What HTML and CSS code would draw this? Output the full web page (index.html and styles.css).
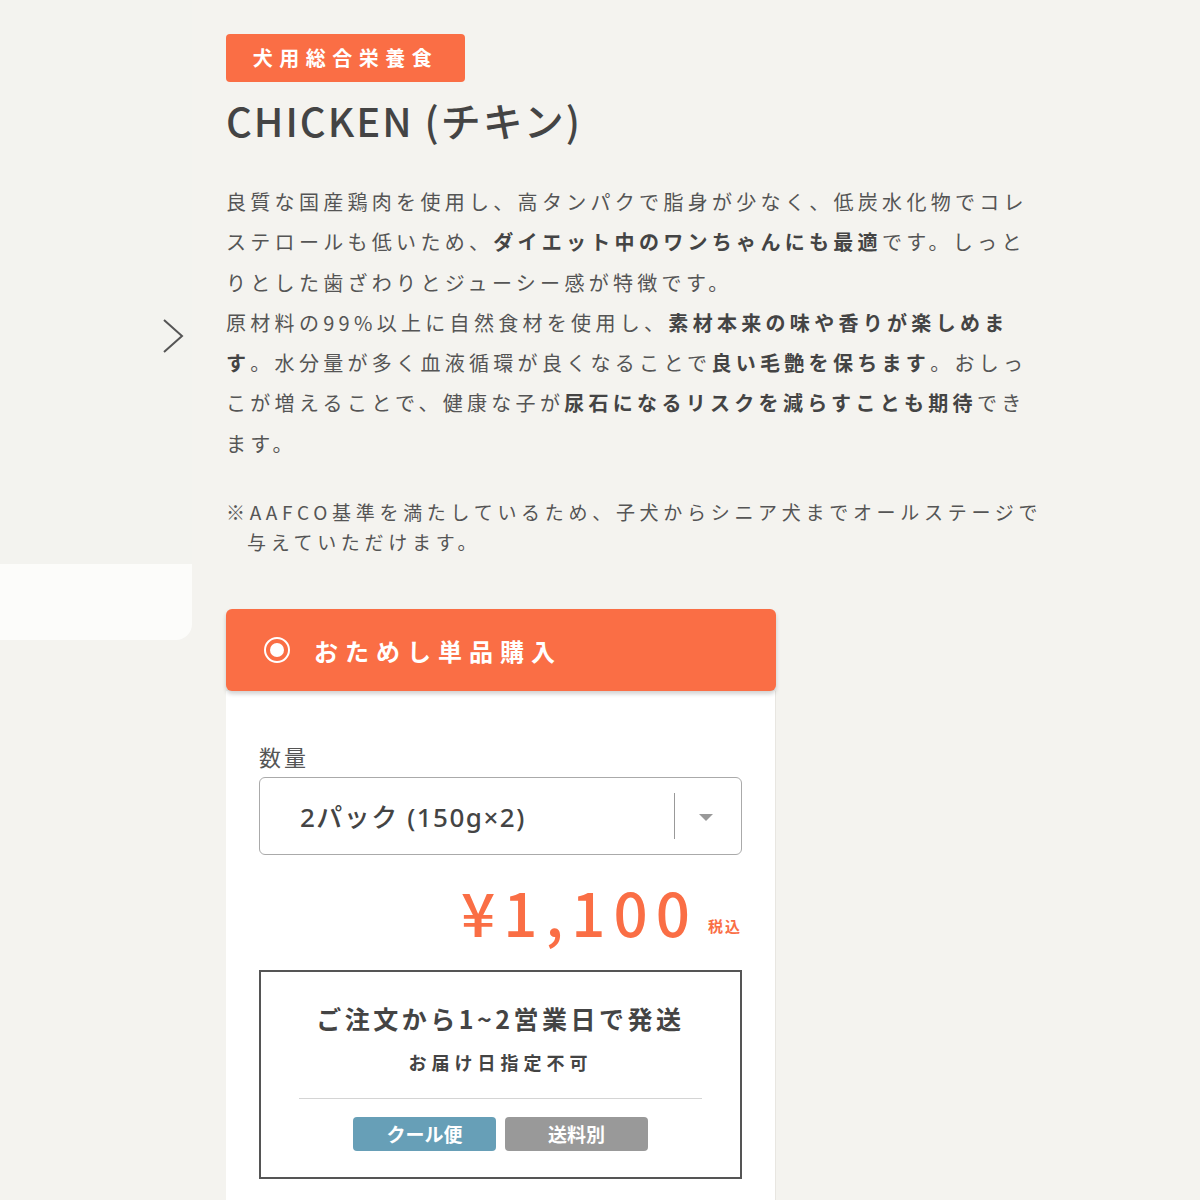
FILE: index.html
```html
<!DOCTYPE html>
<html lang="ja">
<head>
    <meta charset="utf-8">
    <title>CHICKEN (チキン)</title>
    <link rel="stylesheet" href="styles.css">
</head>
<body>
    <div class="page">
        <div class="gallery">
            <div class="gallery-image"></div>
            <div class="gallery-caption"></div>
            <button class="gallery-next" aria-label="次へ">
                <svg width="22" height="36" viewBox="0 0 22 36"><path d="M2 2 L20 18 L2 34" fill="none" stroke="#555" stroke-width="2"/></svg>
            </button>
        </div>

        <div class="product">
            <span class="badge">犬用総合栄養食</span>
            <h1 class="title">CHICKEN (チキン)</h1>

            <p class="desc">
                良質な国産鶏肉を使用し、高タンパクで脂身が少なく、低炭水化物でコレ<br>ステロールも低いため、<b>ダイエット中のワンちゃんにも最適</b>です。しっと<br>りとした歯ざわりとジューシー感が特徴です。<br>原材料の99%以上に自然食材を使用し、<b>素材本来の味や香りが楽しめま<br>す</b>。水分量が多く血液循環が良くなることで<b>良い毛艶を保ちます</b>。おしっ<br>こが増えることで、健康な子が<b>尿石になるリスクを減らすことも期待</b>でき<br>ます。
            </p>

            <p class="note">※AAFCO基準を満たしているため、子犬からシニア犬までオールステージで与えていただけます。</p>

            <div class="purchase">
                <div class="purchase-head">
                    <span class="radio"></span>
                    おためし単品購入
                </div>
                <div class="purchase-body">
                    <label class="qty-label">数量</label>
                    <div class="select">
                        <span class="select-value">2パック (150g×2)</span>
                        <span class="select-sep"></span>
                        <span class="select-arrow"></span>
                    </div>

                    <div class="price">¥1,100<small>税込</small></div>

                    <div class="ship">
                        <div class="ship-title">ご注文から1~2営業日で発送</div>
                        <div class="ship-sub">お届け日指定不可</div>
                        <hr>
                        <div class="tags">
                            <span class="tag tag-cool">クール便</span>
                            <span class="tag tag-fee">送料別</span>
                        </div>
                    </div>
                </div>
            </div>
        </div>
    </div>
</body>
</html>
```

FILE: styles.css
```css
body {
    margin: 0;
    background: #f4f3ef;
    color: #555;
    font-family: "Noto Sans CJK JP", "Noto Sans", sans-serif;
}
.page {
    display: flex;
    gap: 34px;
    align-items: flex-start;
}

/* 左側のスライダー */
.gallery {
    position: relative;
    width: 192px;
    height: 640px;
    flex-shrink: 0;
    display: flex;
    flex-direction: column;
    border-bottom-right-radius: 16px;
    overflow: hidden;
}
.gallery-image {
    flex: 1;
    background: #f3f3ef;
}
.gallery-caption {
    height: 76px;
    background: #fcfcfa;
}
.gallery-next {
    position: absolute;
    top: 318px;
    right: 8px;
    padding: 0;
    border: none;
    background: none;
    cursor: pointer;
}

/* 商品情報 */
.product {
    width: 830px;
    padding-top: 34px;
}
.badge {
    display: inline-block;
    width: 239px;
    height: 48px;
    line-height: 48px;
    text-align: center;
    background: #fa6e45;
    color: #fff;
    border-radius: 4px;
    font-size: 20px;
    font-weight: 700;
    letter-spacing: 6.5px;
}
.title {
    margin: 14px 0 0;
    font-size: 40px;
    font-weight: 500;
    color: #444;
    letter-spacing: 2px;
    line-height: 1.2;
}
.desc {
    margin: 38px 0 0;
    font-size: 20px;
    line-height: 40.3px;
    letter-spacing: 4.3px;
    white-space: nowrap;
}
.desc b {
    color: #444;
}
.note {
    margin: 33px 0 0;
    width: 805px;
    padding-left: 21px;
    text-indent: -21px;
    font-size: 19px;
    line-height: 30px;
    letter-spacing: 4.7px;
}

/* 購入カード */
.purchase {
    width: 550px;
    margin-top: 52px;
}
.purchase-head {
    display: flex;
    align-items: center;
    gap: 24px;
    height: 82px;
    padding-left: 38px;
    background: #fa6e45;
    color: #fff;
    border-radius: 6px;
    box-shadow: 0 3px 4px rgba(0, 0, 0, 0.18);
    font-size: 24px;
    font-weight: 700;
    letter-spacing: 7px;
    position: relative;
}
.radio {
    width: 22px;
    height: 22px;
    border: 2.5px solid #fff;
    border-radius: 50%;
    display: flex;
    align-items: center;
    justify-content: center;
}
.radio::after {
    content: "";
    width: 14px;
    height: 14px;
    border-radius: 50%;
    background: #fff;
}
.purchase-body {
    background: #fff;
    padding: 50px 33px 40px;
    border-right: 1px solid #e8e6e1;
}
.qty-label {
    display: block;
    font-size: 22px;
    letter-spacing: 3px;
    line-height: 30px;
}
.select {
    display: flex;
    align-items: center;
    height: 76px;
    margin-top: 6px;
    border: 1.5px solid #aaa;
    border-radius: 6px;
}
.select-value {
    flex: 1;
    padding-left: 40px;
    font-family: "Noto Sans", "Noto Sans CJK JP", sans-serif;
    font-size: 26px;
    font-weight: 500;
    color: #444;
    letter-spacing: 1.5px;
}
.select-sep {
    width: 1px;
    height: 46px;
    background: #999;
}
.select-arrow {
    width: 0;
    height: 0;
    margin: 2px 28px 0 24px;
    border-left: 7px solid transparent;
    border-right: 7px solid transparent;
    border-top: 7px solid #999;
}
.price {
    text-align: right;
    margin-top: 24px;
    color: #fa6e45;
    font-size: 60px;
    font-weight: 500;
    letter-spacing: 8px;
    line-height: 64px;
}
.price small {
    font-size: 15px;
    font-weight: 700;
    letter-spacing: 2px;
    margin-left: 10px;
    vertical-align: 5px;
}
.ship {
    margin-top: 12px;
    border: 2px solid #555;
    padding: 28px 38px 26px;
    text-align: center;
    color: #444;
}
.ship-title {
    font-size: 25px;
    font-weight: 700;
    letter-spacing: 3.5px;
    line-height: 36px;
}
.ship-sub {
    margin-top: 12px;
    font-size: 18px;
    font-weight: 700;
    letter-spacing: 5px;
    line-height: 28px;
}
.ship hr {
    margin: 22px 0 18px;
    border: none;
    border-top: 1.5px solid #d4d4d4;
}
.tags {
    display: flex;
    justify-content: center;
    gap: 9px;
}
.tag {
    width: 143px;
    height: 34px;
    line-height: 34px;
    border-radius: 4px;
    color: #fff;
    font-size: 19px;
    font-weight: 700;
}
.tag-cool {
    background: #679fb7;
}
.tag-fee {
    background: #999;
}
```
